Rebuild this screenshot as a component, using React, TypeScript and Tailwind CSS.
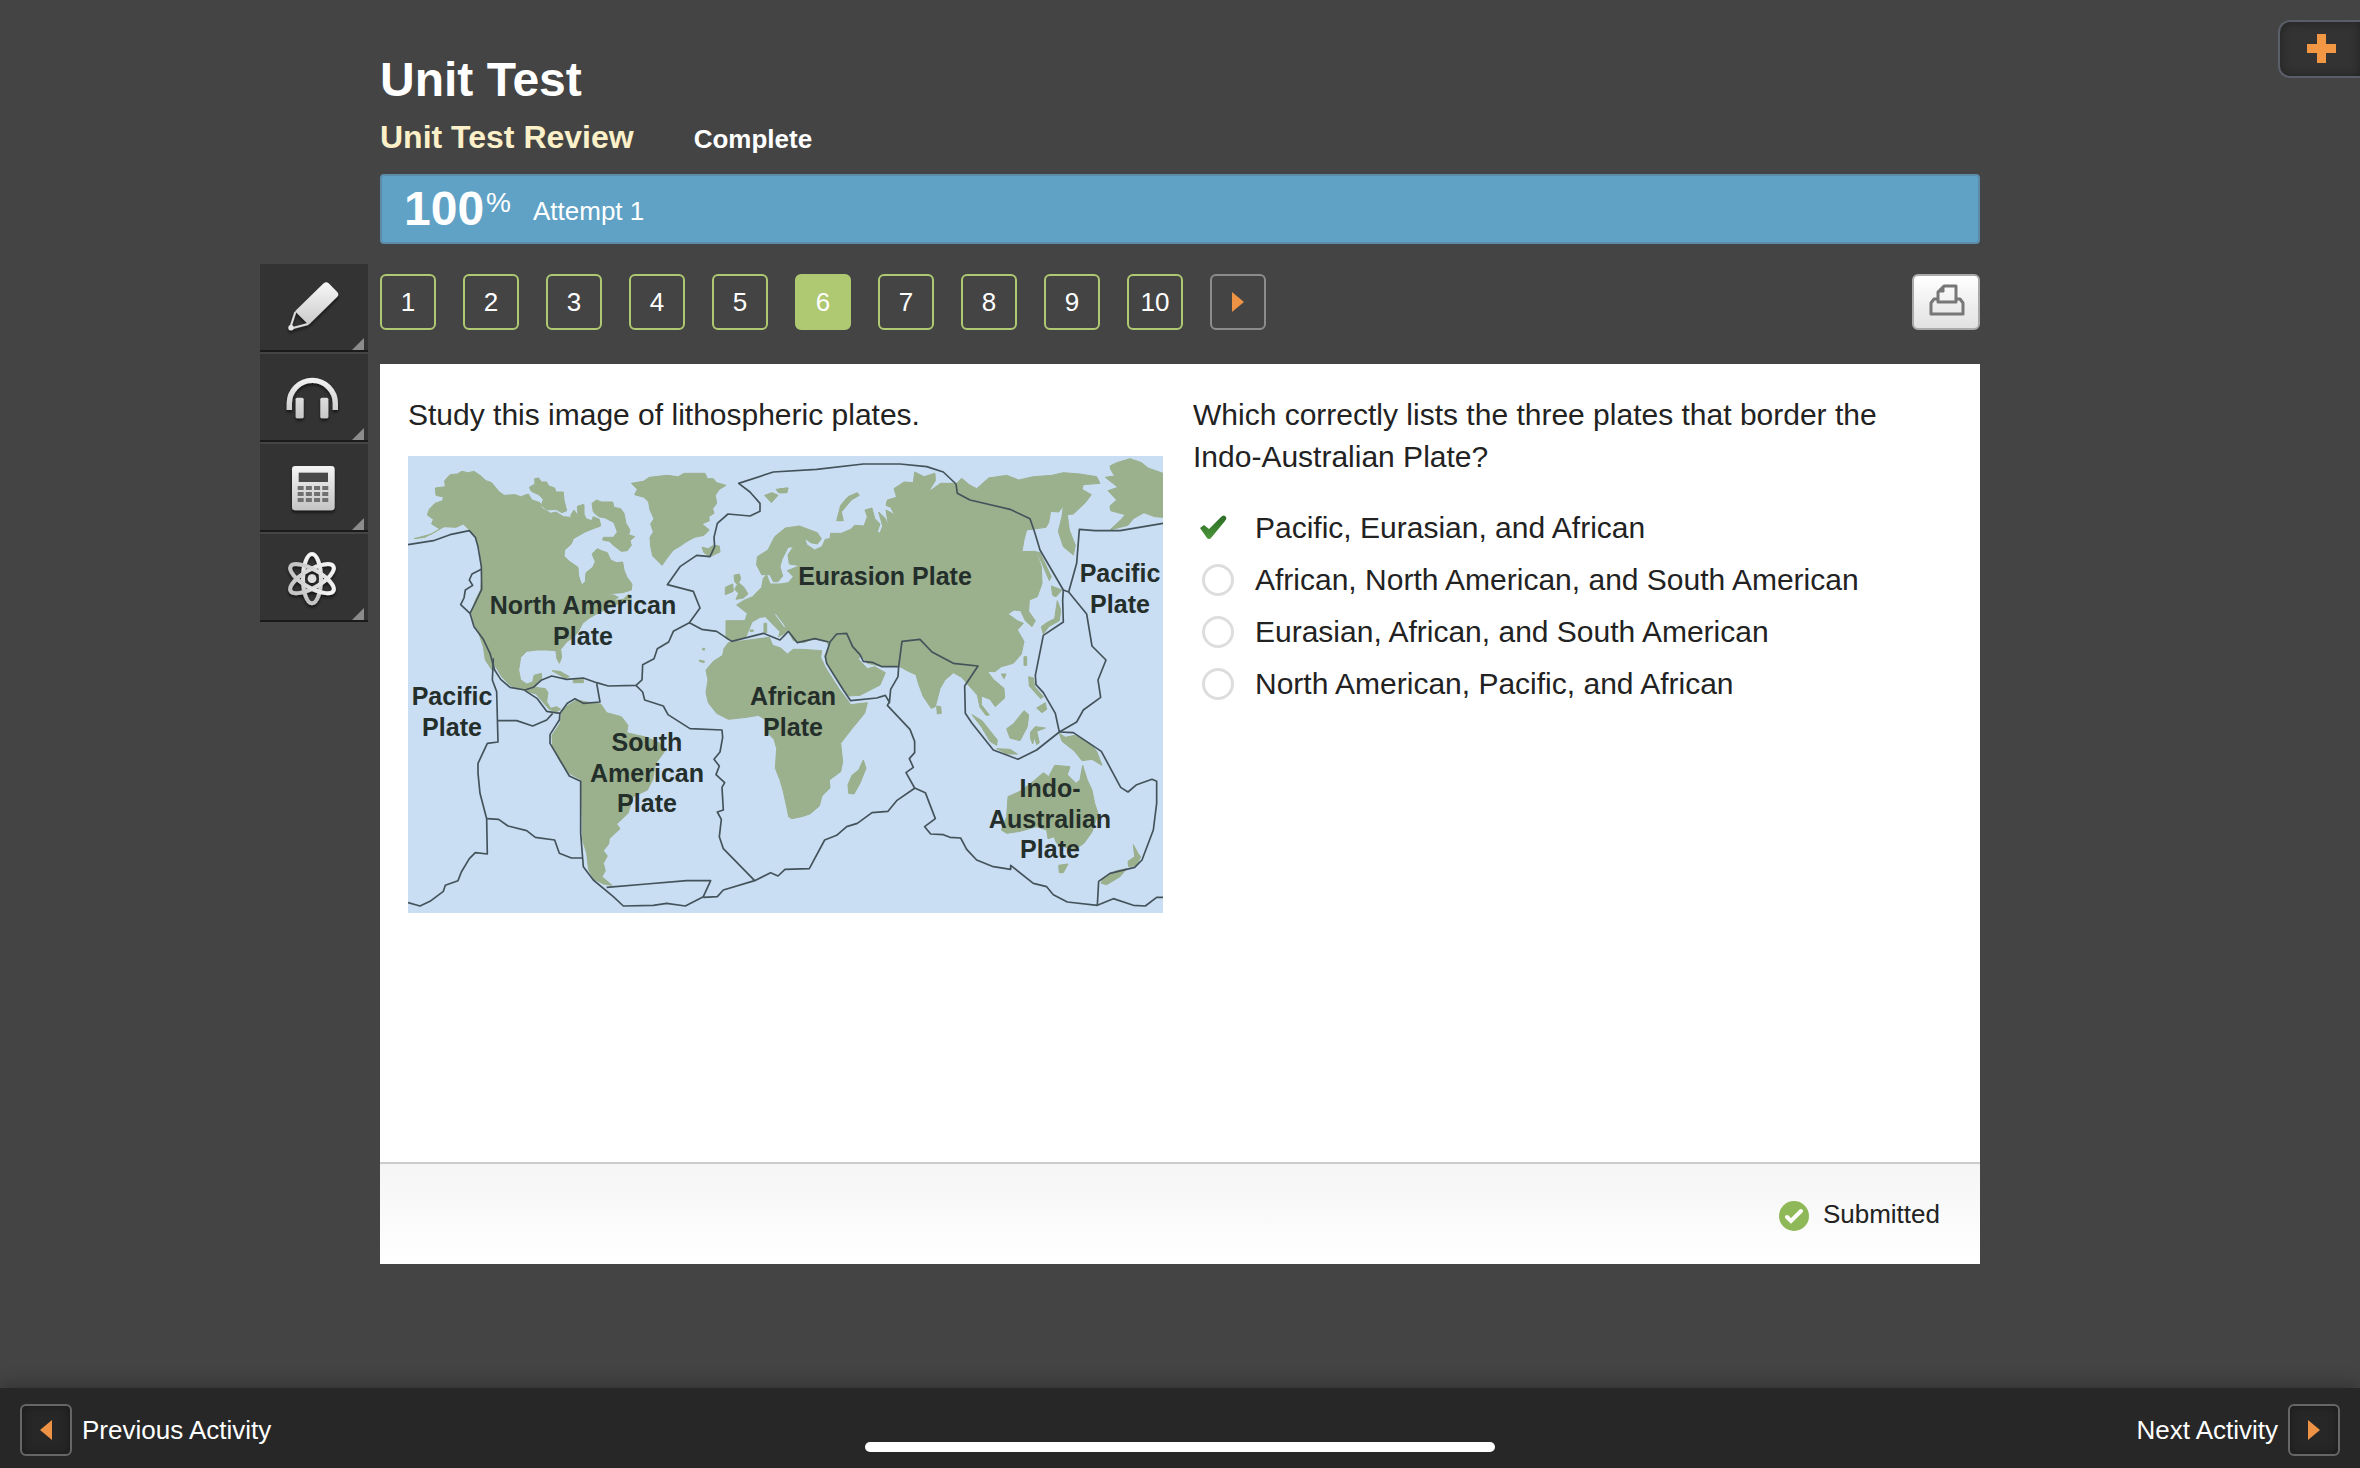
import { useState } from 'react';
import type { ReactNode } from 'react';

const questions = [1, 2, 3, 4, 5, 6, 7, 8, 9, 10];

const options = [
  'Pacific, Eurasian, and African',
  'African, North American, and South American',
  'Eurasian, African, and South American',
  'North American, Pacific, and African',
];

const mapLabels = [
  { x: 175, y: 158, lines: ['North American', 'Plate'] },
  { x: 477, y: 129, lines: ['Eurasion Plate'] },
  { x: 712, y: 126, lines: ['Pacific', 'Plate'] },
  { x: 44, y: 249, lines: ['Pacific', 'Plate'] },
  { x: 239, y: 295, lines: ['South', 'American', 'Plate'] },
  { x: 385, y: 249, lines: ['African', 'Plate'] },
  { x: 642, y: 341, lines: ['Indo-', 'Australian', 'Plate'] },
];

function PlateMap() {
  return (
    <svg viewBox="0 0 755 457" className="block w-full" role="img" aria-label="Map of lithospheric plates">
      <rect width="755" height="457" fill="#c9ddf3" />
      <g transform="scale(0.33333)">
        {/* Land */}
        <g fill="#9bb08d" stroke="#9bb08d" strokeWidth="3" strokeLinejoin="round">
          {/* North America and Greenland */}
          <g transform="translate(-24 -18)">
            <path d="M42 266 75 262 110 243 135 228 118 236 95 222 100 208 82 195 88 178 105 160 128 152 130 141 108 136 106 114 136 110 134 92 150 74 172 72 185 64 205 68 222 64 240 76 258 92 275 98 296 124 312 136 345 134 362 140 385 132 396 150 420 158 425 174 452 190 468 186 490 200 512 202 520 214 512 196 522 180 534 198 532 170 548 164 552 192 558 206 575 212 580 200 598 208 602 228 580 236 555 246 520 266 514 282 494 300 492 318 508 334 534 352 536 378 545 405 556 395 558 368 578 352 586 335 576 312 592 296 605 302 622 308 632 330 650 338 668 336 672 360 680 380 696 402 694 420 668 428 640 430 606 442 640 434 655 442 640 452 670 448 686 432 694 448 640 466 600 486 568 504 548 520 535 545 522 560 500 576 482 598 485 622 478 640 470 624 468 602 440 600 410 600 380 604 362 622 356 660 362 690 380 702 398 696 402 676 424 670 425 684 412 700 406 712 436 716 444 728 440 755 452 775 470 770 482 778 468 786 448 778 425 752 408 732 375 722 330 706 305 680 290 655 272 630 258 612 248 585 240 560 222 520 214 490 226 450 242 420 246 370 240 300 226 258 204 236 190 222 168 232 130 230 95 252Z" />
            <path d="M250 590 268 622 284 660 276 660 256 630Z" />
            <path d="M388 112 405 102 404 86 416 84 424 96 440 96 446 108 464 114 468 126 490 126 492 150 500 182 486 188 468 178 440 180 424 166 430 148 416 134 394 124Z" />
            <path d="M576 160 590 150 604 156 638 156 642 172 662 176 672 190 678 220 690 240 686 254 704 260 690 272 694 286 682 302 664 304 640 286 628 274 608 270 610 262 640 262 652 246 642 218 616 204 596 200 580 186Z" />
            <path d="M535 168 552 164 552 190 538 194Z" />
            <path d="M694 100 730 94 748 82 800 76 835 80 852 70 915 70 922 86 940 86 950 98 978 106 958 118 946 136 950 160 938 176 942 190 926 200 928 212 906 222 928 240 912 256 884 262 858 276 838 290 820 300 800 326 786 346 770 330 758 318 752 290 750 262 760 246 752 222 762 206 750 180 746 156 732 142 704 134 712 118Z" />
            <path d="M906 292 925 296 940 286 958 288 960 306 930 320 912 308Z" />
            <path d="M456 662 480 664 508 680 495 684 470 670ZM520 686 550 688 550 698 520 698Z" />
            {/* British Isles */}
            <path d="M1002 376 1018 372 1022 386 1016 398 1032 412 1044 432 1030 444 1008 448 1016 430 1004 418 1012 404 1004 394ZM976 412 998 402 1000 424 976 434Z" />
            <path d="M1094 136 1116 128 1134 136 1114 158ZM1128 118 1164 114 1160 128 1136 128Z" />
            <path d="M908 595h6v5h-6ZM898 630 914 634 912 638 898 634ZM1050 540h10v4h-10ZM1092 520h8v28h-8Z" />
            {/* Africa */}
            <path d="M985 578 1030 572 1108 562 1118 586 1142 594 1162 612 1180 598 1205 598 1235 600 1265 602 1262 622 1276 652 1318 718 1338 744 1352 764 1402 758 1394 790 1356 836 1322 880 1328 935 1322 965 1288 990 1290 1014 1266 1038 1258 1068 1230 1092 1205 1100 1175 1106 1166 1100 1160 1070 1150 1025 1140 990 1126 955 1130 895 1122 868 1104 850 1098 810 1075 796 1040 802 985 808 950 790 925 758 918 728 924 690 918 660 940 634 968 616 972 596Z" />
            <path d="M1390 930 1398 955 1380 1000 1362 1032 1346 1030 1344 1004 1356 976 1376 960Z" />
          </g>
          {/* Eurasia */}
          <g transform="translate(1116 -18)">
            <path d="M-162 512-105 512-98 490-130 465-110 452-82 440-55 412-50 385-40 374-30 402 0 402 25 398 40 380 22 362 60 347 28 342 24 315 40 290 24 292 6 328 0 350 8 378-6 395-20 395-30 374-55 374-70 345-68 320-36 300-16 260 16 234 58 228 112 248 124 266 112 282 92 278 74 264 80 284 104 300 126 290 136 268 150 266 152 250 184 250 212 238 224 226 252 228 262 200 255 180 276 174 284 205 300 222 292 245 300 250 308 228 296 186 316 206 326 230 318 180 344 194 332 172 318 166 322 150 350 142 342 116 372 96 400 98 404 66 432 80 465 70 466 92 445 126 482 100 530 100 545 85 568 104 590 116 626 84 680 76 716 90 760 80 816 76 850 68 900 72 950 80 960 100 910 104 906 118 934 134 916 158 880 192 862 194 868 240 886 286 880 315 850 290 835 244 846 200 850 168 836 186 812 184 806 218 798 232 740 240 732 270 726 305 768 304 784 350 786 400 772 440 748 450 746 484 766 512 756 530 736 512 722 482 702 480 684 492 712 512 730 520 712 540 732 574 724 612 700 640 664 650 645 665 622 664 640 688 672 715 674 744 646 770 630 748 604 738 604 764 628 795 618 796 600 772 592 735 565 705 545 682 520 668 495 690 480 716 466 770 454 775 430 740 415 700 408 674 385 664 360 650 300 648 262 640 240 614 236 628 262 656 284 650 316 668 300 705 240 736 206 738 180 705 146 650 134 618 146 590 142 576 100 566 70 578 40 572 26 545 10 520-10 494-22 486 10 530 24 538 14 550-4 560 0 545-44 500-60 502-84 516-102 560-140 572-162 566Z" />
            <path d="M170 212 190 212 184 186 214 150 238 136 232 128 204 140 182 166ZM770 306 780 308 814 380 808 392 786 340ZM814 408 846 420 828 440 818 436ZM832 452 842 480 838 512 806 530 790 552 784 530 800 518 824 506ZM732 620h8v26h-8ZM664 672 678 672 672 686ZM746 680 760 684 764 710 790 740 782 746 748 708Z" />
            <path d="M976 82 1004 78 992 58 990 48 1010 38 1050 26 1085 38 1104 54 1149 70 1149 202 1124 200 1092 188 1060 206 1044 226 990 240 1024 208 1036 194 992 182 990 168 1010 150 984 122 1014 112Z" />
            <path d="M0 116 24 114 20 128 0 128Z" />
          </g>
          {/* South America */}
          <g transform="translate(-24 672)">
            <path d="M486 92 504 76 530 60 560 66 602 72 620 98 664 110 684 136 680 158 740 172 780 190 794 214 766 252 758 300 742 330 700 350 684 400 650 432 660 446 628 476 626 492 610 512 622 528 610 550 616 572 606 590 636 616 610 612 580 596 566 570 560 520 548 480 546 400 544 300 508 280 480 244 458 200 456 166 480 130Z" />
          </g>
          {/* South-east Asia and Oceania */}
          <g transform="translate(1116 672)">
            <path d="M470 78 482 80 484 100 472 102ZM576 104 606 122 652 180 650 196 630 184 604 140ZM650 206 690 208 712 222 680 222ZM680 146 700 132 732 92 746 104 742 140 720 182 690 174ZM752 156 766 140 796 144 770 154 778 188 770 194 764 172 758 192 752 176ZM770 84 796 68 800 88 786 98Z" />
            <path d="M838 160 856 172 884 166 930 190 950 214 966 256 936 238 906 242 884 214 846 184Z" />
            <path d="M684 350 720 334 760 304 790 278 806 290 824 256 870 260 862 284 888 310 900 300 908 256 922 300 936 330 944 370 954 400 936 456 912 490 880 512 830 490 822 470 804 476 800 450 770 440 720 454 680 460 664 450 680 410Z" />
            <path d="M836 556 864 552 850 578 838 578ZM1060 494 1074 520 1082 530 1070 556 1046 560 1044 544 1064 530ZM1040 566 1020 590 980 614 964 610 968 594 1010 572Z" />
          </g>
        </g>
        {/* Plate boundaries */}
        <g fill="none" stroke="#44535a" strokeWidth="5" strokeLinejoin="round">
          <g transform="translate(-24 -18)">
            <path d="M24 284 100 272 150 254 208 242 226 262 234 290 244 350 245 418 230 450 210 490 222 530 250 568 270 610 284 660 302 688 330 712 375 720 400 712 425 690 455 678 500 688 550 684 590 698 625 708 708 706 726 690 728 644 762 626 772 596 806 576 820 544 868 518 900 474 880 424 802 404 840 350 890 316 930 320 944 290 942 262 952 220 984 192 1050 198 1080 184 1080 160 1050 126 1016 100 1120 66 1250 58 1390 42 1500 42 1580 50 1630 66 1668 102 1672 130 1710 150 1830 178 1890 206 1905 250 1920 300 1990 420" />
            <path d="M244 358 216 372 208 390 218 406 196 420 192 444 182 464 210 490M280 625 277 690 290 725 294 876 262 880 234 940 234 970 240 1030 260 1106 262 1212 226 1208 208 1226 184 1266 174 1292 136 1306 130 1324 90 1354 60 1368 24 1358" />
            <path d="M868 518 905 538 950 544 995 574 1090 550 1140 570 1165 544 1192 578 1245 566 1286 576" />
            <path d="M590 700 600 756 550 760 525 746 502 760 480 790 440 784 412 746 375 722M458 790 440 810 398 828 350 812 294 812" />
          </g>
          <g transform="translate(-24 672)">
            <path d="M480 98 478 120 450 164 450 190 508 288 542 304 542 460 550 560 580 600 640 650 670 678 760 676 800 670 856 678 910 650 932 602 860 602 740 612 620 622M260 416 296 418 324 438 380 452 406 472 464 480 478 520 514 534 548 534M910 652 952 650 970 630 1064 602 1112 578 1134 588 1155 568 1228 566 1274 480 1310 466 1340 440 1372 430 1416 398 1464 394 1490 362 1545 324" />
            <path d="M708 16 728 36 734 60 790 78 804 104 870 146 966 150 968 172 960 216 942 238 958 258 948 284 974 308 966 322 970 390 952 396 964 418 958 470 970 506 1064 602" />
          </g>
          <g transform="translate(1116 -18)">
            <path d="M190 720 140 640 136 620 150 576 170 552 200 550 218 590 240 614 250 634 280 638 306 650 356 650 366 574 420 568 456 606 520 640 594 648 554 708 556 790 576 820 640 900 714 928 770 900 838 846 826 790 790 728 768 704 766 676 790 556 850 516 848 450 850 420 866 426 920 492 936 588 978 630 954 690 962 742 910 780 890 816 838 846" />
            <path d="M1149 220 1020 242 945 242 898 238 890 340 866 426M356 650 354 680 332 718 328 760M190 720 212 752 290 744 316 736 328 756 322 766 390 838 404 874 404 908 388 926 400 952 378 968 404 1014" />
          </g>
          <g transform="translate(1116 672)">
            <path d="M404 324 436 338 466 416 434 440 452 462 490 464 510 472 542 474 560 508 590 540 640 560 692 568 692 556 760 610 800 620 820 644 862 666 952 676 1000 656 1060 676 1096 678 1130 652 1149 652M952 676 956 604 990 580 1064 562 1086 540 1120 450 1130 370 1130 304 1116 298 1070 314 1044 336 1022 322 964 214 880 158 838 156" />
          </g>
        </g>
      </g>
      <g fill="#242f2b" fontSize="25" fontWeight="700" textAnchor="middle">
        {mapLabels.map((label) =>
          label.lines.map((line, i) => (
            <text key={`${label.x}-${line}`} x={label.x} y={label.y + i * 30 + (i > 0 ? 1 : 0)}>
              {line}
            </text>
          ))
        )}
      </g>
    </svg>
  );
}

function ToolButton({ label, children }: { label: string; children: ReactNode }) {
  return (
    <button type="button" aria-label={label} className="block h-[88px] w-[108px] border-b-2 border-[#1a1a1a] bg-[#333333]">
      <svg viewBox="0 0 324 258" className="block h-[86px] w-[108px]">
        <defs>
          <linearGradient id="tool" x1="0" y1="60" x2="0" y2="200" gradientUnits="userSpaceOnUse">
            <stop offset="0" stopColor="#f6f6f6" />
            <stop offset="1" stopColor="#c4c4c4" />
          </linearGradient>
          <filter id="toolShadow" x="-20%" y="-20%" width="140%" height="150%">
            <feDropShadow dx="0" dy="7" stdDeviation="5" floodColor="#000" floodOpacity="0.6" />
          </filter>
        </defs>
        <g filter="url(#toolShadow)">{children}</g>
        <path d="M312 222v36h-36Z" fill="#8c8c8c" />
      </svg>
    </button>
  );
}

function Toolbar() {
  return (
    <aside className="mr-3 mt-[264px] flex flex-col gap-0.5 justify-self-end">
      <ToolButton label="Highlighter">
        <path d="M105 142 191 58q8-7 15 0l25 25q8 8 0 16L146 182Z" fill="url(#tool)" />
        <path d="M106 144 90 194l54-14" fill="none" stroke="#dcdcdc" strokeWidth="6" strokeLinejoin="round" />
        <circle cx="93" cy="191" r="8" fill="#e6e6e6" />
      </ToolButton>
      <ToolButton label="Audio">
        <path d="M88 168v-20a69 69 0 0 1 138 0v20" fill="none" stroke="url(#tool)" strokeWidth="16" />
        <rect x="107" y="131" width="24" height="62" rx="5" fill="url(#tool)" />
        <rect x="181" y="131" width="24" height="62" rx="5" fill="url(#tool)" />
      </ToolButton>
      <ToolButton label="Calculator">
        <rect x="96" y="66" width="128" height="133" rx="10" fill="url(#tool)" />
        <rect x="116" y="86" width="88" height="28" fill="#4a4a4a" />
        <path d="M113 132h92M113 150h92M113 168h92" stroke="#6f6f6f" strokeWidth="12" strokeDasharray="18 6.6" />
      </ToolButton>
      <ToolButton label="Periodic table">
        <g fill="none" stroke="url(#tool)" strokeWidth="12">
          <ellipse cx="156" cy="134" rx="27" ry="74" />
          <ellipse cx="156" cy="134" rx="27" ry="74" transform="rotate(60 156 134)" />
          <ellipse cx="156" cy="134" rx="27" ry="74" transform="rotate(120 156 134)" />
        </g>
        <circle cx="156" cy="134" r="13" fill="#dedede" />
      </ToolButton>
    </aside>
  );
}

function Arrow({ direction }: { direction: 'left' | 'right' }) {
  return (
    <svg viewBox="0 0 12 20" className="h-5 w-3" fill="#ee9345" aria-hidden="true">
      <path d={direction === 'left' ? 'M12 0v20L0 10Z' : 'M0 0v20L12 10Z'} />
    </svg>
  );
}

export default function App() {
  const [current, setCurrent] = useState(6);

  return (
    <div className="relative flex min-h-screen flex-col bg-[#444444] font-['Liberation_Sans',Arial,sans-serif] text-white">
      <button
        type="button"
        aria-label="Add"
        className="absolute right-0 top-5 flex h-[58px] w-[82px] items-center justify-center rounded-l-xl border-2 border-r-0 border-[#5a5e68] bg-[#333333] pb-0.5 pl-0.5 shadow-[inset_0_0_10px_#222222]"
      >
        <svg viewBox="0 0 29 29" className="h-[29px] w-[29px]" fill="#f29744">
          <path d="M10 0h9v10h10v9H19v10h-9V19H0v-9h10Z" />
        </svg>
      </button>

      <div className="grid flex-1 grid-cols-[1fr_minmax(0,1600px)_1fr] items-start">
        <Toolbar />

        <main className="pb-[120px] pt-[52px]">
          <h1 className="text-[48px] font-bold leading-[56px]">Unit Test</h1>
          <div className="mt-[9px] flex h-10 items-baseline gap-[60px] leading-10">
            <h2 className="text-[32px] font-bold text-[#fbf0c8]">Unit Test Review</h2>
            <span className="text-[26px] font-bold">Complete</span>
          </div>

          <div className="mt-[17px] flex h-[70px] items-center rounded border-2 border-[#5b8dab] bg-[#60a2c6] px-[22px]">
            <span className="text-[48px] font-bold leading-[48px]">100</span>
            <span className="pb-3 pl-0.5 text-[28px]">%</span>
            <span className="ml-[22px] pt-1 text-[26px]">Attempt 1</span>
          </div>

          <nav className="mt-[30px] flex items-center gap-[27px]" aria-label="Questions">
            {questions.map((n) => (
              <button
                key={n}
                type="button"
                onClick={() => setCurrent(n)}
                className={`h-14 w-14 rounded-md border-2 border-[#aec971] text-[26px] ${n === current ? 'bg-[#aec971]' : ''}`}
              >
                {n}
              </button>
            ))}
            <button
              type="button"
              aria-label="Next question"
              className="flex h-14 w-14 items-center justify-center rounded-md border-2 border-[#8c8c8c]"
            >
              <Arrow direction="right" />
            </button>
            <button
              type="button"
              aria-label="Print"
              className="ml-auto flex h-14 w-[68px] items-center justify-center rounded-md border-2 border-[#aaaaaa] bg-linear-to-b from-white to-[#e2e2e2] pb-1 pl-0.5"
            >
              <svg viewBox="0 0 36 32" className="h-8 w-9" fill="none" stroke="#777777" strokeWidth="3" strokeLinejoin="round">
                <path d="M9 15H5l-3 4v11h32V19l-3-4h-4" />
                <path d="M9 18V8l6-6h12v16Z" />
                <path d="M9 8h6V2Z" fill="#777777" strokeWidth="1" />
              </svg>
            </button>
          </nav>

          <section className="mt-[34px] bg-white text-[#222222]">
            <div className="grid min-h-[798px] grid-cols-[755fr_759fr] content-start gap-[30px] px-7 pt-[30px] text-[30px] leading-[42px]">
              <div>
                <p className="mb-5">Study this image of lithospheric plates.</p>
                <PlateMap />
              </div>
              <fieldset>
                <legend>Which correctly lists the three plates that border the Indo-Australian Plate?</legend>
                <div className="mt-6">
                  {options.map((option, i) => (
                    <label key={option} className="flex h-[52px] items-center pl-[6px]">
                      <span className="flex w-[56px] items-center">
                        <input
                          type="radio"
                          name="answer"
                          defaultChecked={i === 0}
                          className="peer ml-[3px] h-8 w-8 appearance-none rounded-full border-3 border-[#dddddd] bg-white checked:sr-only"
                        />
                        <svg viewBox="0 0 28 26" className="hidden h-[26px] w-7 peer-checked:block" aria-hidden="true">
                          <defs>
                            <linearGradient id="tick" x1="0" y1="0" x2="0" y2="1">
                              <stop offset="0" stopColor="#2c6b24" />
                              <stop offset="1" stopColor="#4a963a" />
                            </linearGradient>
                          </defs>
                          <path d="M1 13 5 10l5 4L22 2q3-3 5 0 1 2-1 4L12 23q-2 2-4 0Z" fill="url(#tick)" />
                        </svg>
                      </span>
                      {option}
                    </label>
                  ))}
                </div>
              </fieldset>
            </div>

            <div className="flex h-[102px] items-center justify-end gap-[14px] border-t-2 border-[#cccccc] bg-linear-to-b from-[#f5f5f5] to-white pr-10 text-[26px]">
              <svg viewBox="0 0 30 30" className="mt-1 h-[30px] w-[30px]" aria-hidden="true">
                <circle cx="15" cy="15" r="15" fill="#8fb958" />
                <path d="m8 16 4 4L22 10" fill="none" stroke="#ffffff" strokeWidth="4" strokeLinecap="round" />
              </svg>
              Submitted
            </div>
          </section>
        </main>
      </div>

      <footer className="relative flex h-20 items-center justify-between bg-[#272727] px-5 pt-1 text-[26px] shadow-[0_-4px_16px_rgba(0,0,0,0.25)]">
        <button type="button" className="flex items-center gap-[10px]">
          <span className="flex h-[52px] w-[52px] items-center justify-center rounded-md border-2 border-[#666666] shadow-[inset_0_0_10px_#1a1a1a]">
            <Arrow direction="left" />
          </span>
          Previous Activity
        </button>
        <button type="button" className="flex items-center gap-[10px]">
          Next Activity
          <span className="flex h-[52px] w-[52px] items-center justify-center rounded-md border-2 border-[#666666] shadow-[inset_0_0_10px_#1a1a1a]">
            <Arrow direction="right" />
          </span>
        </button>
        <div className="absolute bottom-4 left-1/2 h-[10px] w-[630px] -translate-x-1/2 rounded-full bg-white" />
      </footer>
    </div>
  );
}
